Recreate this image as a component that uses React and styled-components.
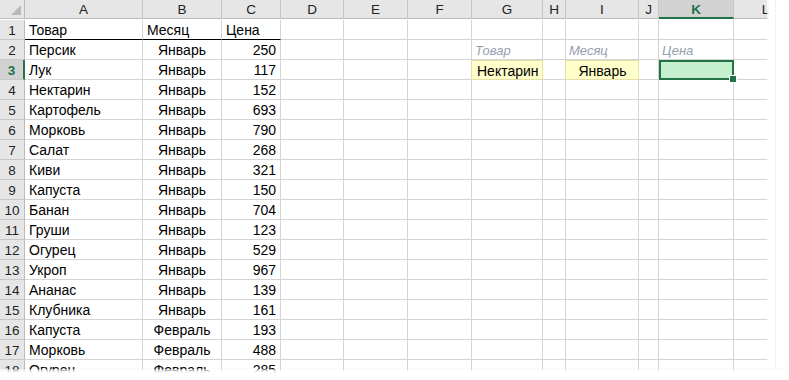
import React from "react";
import styled, { createGlobalStyle, css } from "styled-components";

const Global = createGlobalStyle`
  html, body { margin: 0; padding: 0; background: #fff; }
  body { font-family: "Liberation Sans", Arial, sans-serif; }
`;

const COLS = [
  { key: "A", w: 118 },
  { key: "B", w: 79 },
  { key: "C", w: 59 },
  { key: "D", w: 63 },
  { key: "E", w: 64 },
  { key: "F", w: 64 },
  { key: "G", w: 71 },
  { key: "H", w: 23 },
  { key: "I", w: 73 },
  { key: "J", w: 20 },
  { key: "K", w: 75 },
  { key: "L", w: 64 },
];

const DATA = [
  ["Персик", "Январь", 250],
  ["Лук", "Январь", 117],
  ["Нектарин", "Январь", 152],
  ["Картофель", "Январь", 693],
  ["Морковь", "Январь", 790],
  ["Салат", "Январь", 268],
  ["Киви", "Январь", 321],
  ["Капуста", "Январь", 150],
  ["Банан", "Январь", 704],
  ["Груши", "Январь", 123],
  ["Огурец", "Январь", 529],
  ["Укроп", "Январь", 967],
  ["Ананас", "Январь", 139],
  ["Клубника", "Январь", 161],
  ["Капуста", "Февраль", 193],
  ["Морковь", "Февраль", 488],
  ["Огурец", "Февраль", 285],
];

const Page = styled.div`
  position: relative;
  width: 789px;
  height: 380px;
  overflow: hidden;
  background: #fff;
`;

const Sheet = styled.div`
  width: 789px;
  overflow: hidden;
  display: grid;
  grid-template-columns: 25px ${COLS.map((c) => c.w + "px").join(" ")};
  grid-auto-rows: 20px;
  font-size: 14px;
  color: #000;
`;

const Corner = styled.div`
  position: relative;
  height: 19px;
  background: #e6e6e6;
  border-right: 1px solid #bcbcbc;
  border-bottom: 1px solid #bcbcbc;
  box-sizing: border-box;
  &::after {
    content: "";
    position: absolute;
    right: 3px;
    bottom: 3px;
    border-style: solid;
    border-width: 0 0 10px 10px;
    border-color: transparent transparent #b9b9b9 transparent;
  }
`;

const ColHead = styled.div`
  height: 19px;
  box-sizing: border-box;
  display: flex;
  align-items: center;
  justify-content: center;
  background: ${(p) => (p.$active ? "#d2d2d2" : "#e6e6e6")};
  border-right: 1px solid #c6c6c6;
  border-bottom: ${(p) => (p.$active ? "2px solid #217346" : "1px solid #bcbcbc")};
  color: ${(p) => (p.$active ? "#217346" : "#222")};
  font-weight: ${(p) => (p.$active ? 700 : 400)};
  font-size: 13.5px;
  padding-top: ${(p) => (p.$active ? "1px" : "0")};
`;

const RowHead = styled.div`
  box-sizing: border-box;
  display: flex;
  align-items: center;
  justify-content: center;
  background: ${(p) => (p.$active ? "#d2d2d2" : "#e6e6e6")};
  border-bottom: 1px solid #c6c6c6;
  border-right: ${(p) => (p.$active ? "2px solid #217346" : "1px solid #bcbcbc")};
  color: ${(p) => (p.$active ? "#217346" : "#222")};
  font-weight: ${(p) => (p.$active ? 700 : 400)};
  font-size: 13.5px;
  padding-top: 1px;
`;

const Cell = styled.div`
  position: relative;
  box-sizing: border-box;
  display: flex;
  align-items: center;
  padding: 1px 4px 0;
  white-space: nowrap;
  overflow: visible;
  border-right: 1px solid #d4d4d4;
  border-bottom: 1px solid #d4d4d4;
  justify-content: ${(p) =>
    p.$align === "right" ? "flex-end" : p.$align === "center" ? "center" : "flex-start"};
  ${(p) =>
    p.$underline &&
    css`
      border-bottom: 1px solid #000;
    `}
  ${(p) =>
    p.$label &&
    css`
      font-style: italic;
      font-size: 13px;
      color: #95a0ad;
      padding-left: 3px;
    `}
  ${(p) =>
    p.$input &&
    css`
      background: #ffffcc;
      border: 1px solid #e8dfa6;
      margin: 0 0 0 -1px;
      padding-left: 5px;
    `}
  ${(p) =>
    p.$selected &&
    css`
      background: #c6efce;
      outline: 2px solid #217346;
      outline-offset: -2px;
      &::after {
        content: "";
        position: absolute;
        right: -4px;
        bottom: -4px;
        width: 6px;
        height: 6px;
        background: #217346;
        border: 1px solid #fff;
        z-index: 2;
      }
    `}
`;

/* torn-paper edge along the bottom */
const FadeBottom = styled.div`
  position: absolute;
  left: 0;
  right: 0;
  top: 369px;
  bottom: 0;
  background: linear-gradient(to bottom, rgba(255, 255, 255, 0.35), rgba(255, 255, 255, 0.8) 2px, #fff 4px);
  box-shadow: 0 -1px 2px rgba(0, 0, 0, 0.03);
  pointer-events: none;
`;

/* torn-paper edge along the right side */
const FadeRight = styled.div`
  position: absolute;
  top: 0;
  bottom: 0;
  left: 767px;
  width: 22px;
  background: linear-gradient(to right, rgba(255, 255, 255, 0.6), #fff 3px);
  pointer-events: none;
  &::after {
    content: "";
    position: absolute;
    top: 0;
    bottom: 12px;
    left: 8px;
    width: 1px;
    background: #f2f2f2;
  }
`;

function bodyCell(rowNo, col) {
  const k = col.key;
  const d = DATA[rowNo - 2];
  if (rowNo === 1) {
    const txt = { A: "Товар", B: "Месяц", C: "Цена" }[k];
    return (
      <Cell key={k} $underline={k === "A" || k === "B" || k === "C"}>
        {txt}
      </Cell>
    );
  }
  if (k === "A") return <Cell key={k}>{d[0]}</Cell>;
  if (k === "B") return <Cell key={k} $align="center">{d[1]}</Cell>;
  if (k === "C") return <Cell key={k} $align="right">{d[2]}</Cell>;
  if (rowNo === 2 && (k === "G" || k === "I" || k === "K")) {
    const txt = { G: "Товар", I: "Месяц", K: "Цена" }[k];
    return <Cell key={k} $label>{txt}</Cell>;
  }
  if (rowNo === 3 && k === "G") return <Cell key={k} $input>Нектарин</Cell>;
  if (rowNo === 3 && k === "I") return <Cell key={k} $input $align="center">Январь</Cell>;
  if (rowNo === 3 && k === "K") return <Cell key={k} $selected />;
  return <Cell key={k} />;
}

export default function App() {
  const rows = [];
  for (let r = 1; r <= 18; r++) {
    rows.push(
      <React.Fragment key={r}>
        <RowHead $active={r === 3}>{r}</RowHead>
        {COLS.map((c) => bodyCell(r, c))}
      </React.Fragment>
    );
  }
  return (
    <Page>
      <Global />
      <Sheet>
        <Corner />
        {COLS.map((c) => (
          <ColHead key={c.key} $active={c.key === "K"}>
            {c.key}
          </ColHead>
        ))}
        {rows}
      </Sheet>
      <FadeRight />
      <FadeBottom />
    </Page>
  );
}
